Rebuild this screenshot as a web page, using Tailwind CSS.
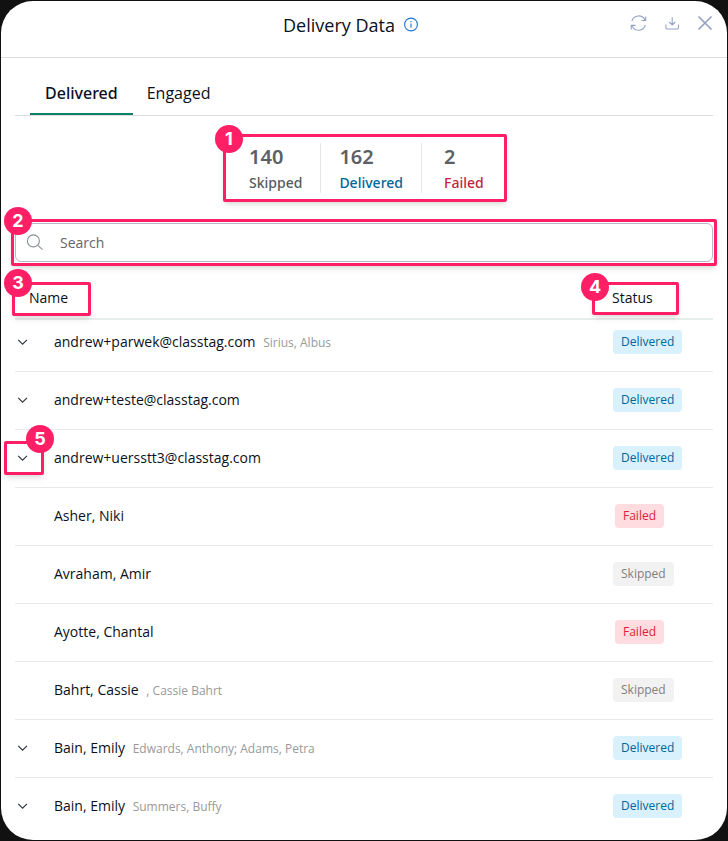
<!DOCTYPE html>
<html lang="en">

<head>
    <meta charset="UTF-8">
    <meta name="viewport" content="width=device-width, initial-scale=1.0">
    <title>Delivery Data</title>
    <script src="https://cdn.jsdelivr.net/npm/@tailwindcss/browser@4"></script>
</head>

<body class="bg-[#111111] font-['Open_Sans','Noto_Sans',sans-serif] text-[#0b1020]">
    <div class="min-h-screen p-px">
        <main class="bg-white rounded-[32px] pb-[5px]">
            <header class="relative flex items-center justify-center h-[57px] pb-2 pr-[26px] border-b border-[#dddddd]">
                <h1 class="text-lg">Delivery Data</h1>
                <button type="button" aria-label="About delivery data" class="ml-2 text-[#1d74d8]">
                    <svg class="size-4" viewBox="0 0 16 16" fill="none" stroke="currentColor" stroke-width="1.1">
                        <circle cx="8" cy="7.5" r="6.4" />
                        <path d="M8 6.5v4.2M8 4.1v1.2" />
                    </svg>
                </button>
                <div class="absolute right-3 top-3 flex items-center gap-[15px] text-[#94a3c4]">
                    <button type="button" aria-label="Refresh">
                        <svg class="size-5" viewBox="0 0 20 20" fill="none" stroke="currentColor" stroke-width="1.1">
                            <path d="M2.9 8.2A6.9 6.9 0 0 1 16 7.2M16.7 3.4v4.1h-4.2M16.3 11.8A6.9 6.9 0 0 1 3 12.4M2.3 16.4v-4h4.3" />
                        </svg>
                    </button>
                    <button type="button" aria-label="Download">
                        <svg class="size-4" viewBox="0 0 16 16" fill="none" stroke="currentColor" stroke-width="1.1">
                            <path d="M1.9 9.5v3a1.5 1.5 0 0 0 1.5 1.5h9.6a1.5 1.5 0 0 0 1.5-1.5v-3M8.2 2.3v7.5M5.2 7l3 3 3-3" />
                        </svg>
                    </button>
                    <button type="button" aria-label="Close">
                        <svg class="size-5" viewBox="0 0 20 20" fill="none" stroke="currentColor" stroke-width="1.7">
                            <path d="M3.5 3.5l13 13M16.5 3.5L3.5 16.5" />
                        </svg>
                    </button>
                </div>
            </header>

            <div class="px-3.5">
                <nav class="flex mt-3.5 px-[15px] border-b border-[#dddddd]">
                    <button type="button" class="h-[43px] px-[15px] font-medium font-['Noto_Sans',sans-serif] border-b-2 border-[#0b8068]">Delivered</button>
                    <button type="button" class="h-[43px] px-3.5 border-b-2 border-transparent">Engaged</button>
                </nav>

                <!-- Totals -->
                <section class="flex justify-center mt-[18px] pl-0.5">
                    <div class="relative w-[284px] h-[68px] flex items-start pt-1.5 pl-[7px] border-3 border-[#ff1f66] rounded-[2px] shadow-md">
                        <span class="absolute -left-[11px] -top-3 flex items-center justify-center size-7 rounded-full bg-[#ff1f66] text-white text-lg font-bold font-[Inter,sans-serif]">1</span>
                        <dl class="flex h-[50px] text-sm font-medium font-['Noto_Sans',sans-serif]">
                            <div class="flex flex-col-reverse justify-between px-4 pr-[18px]">
                                <dt class="text-[#555a60]">Skipped</dt>
                                <dd class="text-xl font-semibold text-[#5c6064]">140</dd>
                            </div>
                            <div class="flex flex-col-reverse justify-between px-[18px] border-l border-[#e5e7eb]">
                                <dt class="text-[#006699]">Delivered</dt>
                                <dd class="text-xl font-semibold text-[#5c6064]">162</dd>
                            </div>
                            <div class="flex flex-col-reverse justify-between px-[22px] border-l border-[#e5e7eb]">
                                <dt class="text-[#c21f3d]">Failed</dt>
                                <dd class="text-xl font-semibold text-[#5c6064]">2</dd>
                            </div>
                        </dl>
                    </div>
                </section>

                <!-- Search -->
                <div class="relative flex items-center mt-[21px] h-[39px]">
                    <div class="absolute -inset-x-1 -top-1 -bottom-1 border-3 border-[#ff1f66] rounded-[2px] shadow-md pointer-events-none"></div>
                    <svg class="absolute left-[11px] size-4.5" viewBox="0 0 18 18" fill="none" stroke="#8b9099" stroke-width="1.1">
                        <circle cx="7.4" cy="6.9" r="6" />
                        <path d="M11.8 11.3l4.8 4.4" />
                    </svg>
                    <input type="search" aria-label="Search" placeholder="Search"
                        class="w-full h-[39px] pl-11 pr-4 text-sm border border-[#b5b9cc] rounded-md outline-none placeholder:text-[#666666]">
                    <span class="absolute -left-[11px] -top-4 flex items-center justify-center size-7 rounded-full bg-[#ff1f66] text-white text-lg font-bold font-[Inter,sans-serif]">2</span>
                </div>

                <table class="w-full mt-[19px] text-sm text-left">
                    <thead>
                        <tr class="h-[38px] border-b-2 border-[#e8eeec]">
                            <th scope="col" colspan="2" class="relative pl-3.5 pb-1 font-normal">
                                Name
                                <span class="absolute -left-[3px] top-px w-[79px] h-[34px] border-3 border-[#ff1f66] rounded-[2px] shadow-md"></span>
                                <span class="absolute -left-[11px] -top-3 flex items-center justify-center size-7 rounded-full bg-[#ff1f66] text-white text-lg font-bold font-[Inter,sans-serif]">3</span>
                            </th>
                            <th scope="col" class="relative w-[101px] pb-1 font-normal">
                                Status
                                <span class="absolute -left-5 top-px w-[87px] h-[33px] border-3 border-[#ff1f66] rounded-[2px] shadow-md"></span>
                                <span class="absolute -left-[31px] -top-2 flex items-center justify-center size-7 rounded-full bg-[#ff1f66] text-white text-lg font-bold font-[Inter,sans-serif]">4</span>
                            </th>
                        </tr>
                    </thead>
                    <tbody>
                        <tr class="h-[52px] border-b border-[#e8e8e8]">
                            <td class="w-[39px] pb-1.5">
                                <button type="button" aria-label="Expand" class="block">
                                    <svg class="size-4" viewBox="0 0 16 16" fill="none" stroke="#333842" stroke-width="1.2"><path d="M3.2 5.8L7.6 10.2l4.4-4.4" /></svg>
                                </button>
                            </td>
                            <td class="pb-1.5">andrew+parwek@classtag.com <span class="ml-1 text-xs text-[#999999]">Sirius, Albus</span></td>
                            <td class="pb-1.5"><span class="inline-block px-2 py-1 text-xs/4 rounded bg-[#d9f0fd] text-[#006699] ml-px">Delivered</span></td>
                        </tr>
                        <tr class="h-[58px] border-b border-[#e8e8e8]">
                            <td>
                                <button type="button" aria-label="Expand" class="block">
                                    <svg class="size-4" viewBox="0 0 16 16" fill="none" stroke="#333842" stroke-width="1.2"><path d="M3.2 5.8L7.6 10.2l4.4-4.4" /></svg>
                                </button>
                            </td>
                            <td>andrew+teste@classtag.com</td>
                            <td><span class="inline-block px-2 py-1 text-xs/4 rounded bg-[#d9f0fd] text-[#006699] ml-px">Delivered</span></td>
                        </tr>
                        <tr class="h-[58px] border-b border-[#e8e8e8]">
                            <td class="relative">
                                <button type="button" aria-label="Expand" class="block">
                                    <svg class="size-4" viewBox="0 0 16 16" fill="none" stroke="#333842" stroke-width="1.2"><path d="M3.2 5.8L7.6 10.2l4.4-4.4" /></svg>
                                </button>
                                <span class="absolute -left-[11px] top-[11px] w-10 h-[34px] border-3 border-[#ff1f66] rounded-[2px] shadow-md pointer-events-none"></span>
                                <span class="absolute left-[11px] -top-[5px] flex items-center justify-center size-7 rounded-full bg-[#ff1f66] text-white text-lg font-bold font-[Inter,sans-serif]">5</span>
                            </td>
                            <td>andrew+uersstt3@classtag.com</td>
                            <td><span class="inline-block px-2 py-1 text-xs/4 rounded bg-[#d9f0fd] text-[#006699] ml-px">Delivered</span></td>
                        </tr>
                        <tr class="h-[58px] border-b border-[#e8e8e8]">
                            <td></td>
                            <td>Asher, Niki</td>
                            <td><span class="inline-block px-2 py-1 text-xs/4 rounded bg-[#ffdcdf] text-[#e01e3c] ml-[3px]">Failed</span></td>
                        </tr>
                        <tr class="h-[58px] border-b border-[#e8e8e8]">
                            <td></td>
                            <td>Avraham, Amir</td>
                            <td><span class="inline-block px-2 py-1 text-xs/4 rounded bg-[#f2f2f2] text-[#808080] ml-px">Skipped</span></td>
                        </tr>
                        <tr class="h-[58px] border-b border-[#e8e8e8]">
                            <td></td>
                            <td>Ayotte, Chantal</td>
                            <td><span class="inline-block px-2 py-1 text-xs/4 rounded bg-[#ffdcdf] text-[#e01e3c] ml-[3px]">Failed</span></td>
                        </tr>
                        <tr class="h-[58px] border-b border-[#e8e8e8]">
                            <td></td>
                            <td>Bahrt, Cassie <span class="ml-1 text-xs text-[#999999]">, Cassie Bahrt</span></td>
                            <td><span class="inline-block px-2 py-1 text-xs/4 rounded bg-[#f2f2f2] text-[#808080] ml-px">Skipped</span></td>
                        </tr>
                        <tr class="h-[58px] border-b border-[#e8e8e8]">
                            <td>
                                <button type="button" aria-label="Expand" class="block">
                                    <svg class="size-4" viewBox="0 0 16 16" fill="none" stroke="#333842" stroke-width="1.2"><path d="M3.2 5.8L7.6 10.2l4.4-4.4" /></svg>
                                </button>
                            </td>
                            <td>Bain, Emily <span class="ml-1 text-xs text-[#999999]">Edwards, Anthony; Adams, Petra</span></td>
                            <td><span class="inline-block px-2 py-1 text-xs/4 rounded bg-[#d9f0fd] text-[#006699] ml-px">Delivered</span></td>
                        </tr>
                        <tr class="h-[58px]">
                            <td>
                                <button type="button" aria-label="Expand" class="block">
                                    <svg class="size-4" viewBox="0 0 16 16" fill="none" stroke="#333842" stroke-width="1.2"><path d="M3.2 5.8L7.6 10.2l4.4-4.4" /></svg>
                                </button>
                            </td>
                            <td>Bain, Emily <span class="ml-1 text-xs text-[#999999]">Summers, Buffy</span></td>
                            <td><span class="inline-block px-2 py-1 text-xs/4 rounded bg-[#d9f0fd] text-[#006699] ml-px">Delivered</span></td>
                        </tr>
                    </tbody>
                </table>
            </div>
        </main>
    </div>
</body>

</html>
